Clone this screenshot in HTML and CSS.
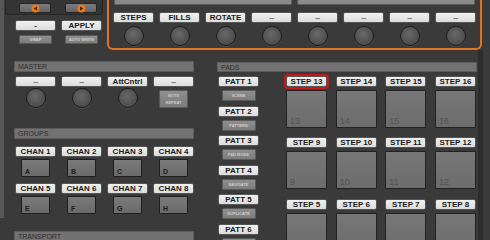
FILE: index.html
```html
<!DOCTYPE html>
<html>
<head>
  <title>Controller Mapping</title>
  <link rel="stylesheet" href="styles.css">
</head>
<body>
  <div class="rig">
    <div class="top">
      <div class="edit">
        <div class="nav">
          <div class="navbtn">
            <svg width="9" height="9" viewBox="0 0 9 9"><circle cx="4.5" cy="4.5" r="4" fill="#e8781c"/><path d="M6 2.4 L2.6 4.5 L6 6.6 Z" fill="#3b2814"/></svg>
          </div>
          <div class="navbtn">
            <svg width="9" height="9" viewBox="0 0 9 9"><circle cx="4.5" cy="4.5" r="4" fill="#e8781c"/><path d="M3 2.4 L6.4 4.5 L3 6.6 Z" fill="#3b2814"/></svg>
          </div>
        </div>
        <div class="pair">
          <div class="lbl">-</div>
          <div class="lbl">APPLY</div>
        </div>
        <div class="minirow">
          <div class="mini">SWAP</div>
          <div class="mini">AUTO WRITE</div>
        </div>
      </div>

      <div class="screen">
        <div class="displays">
          <div class="display"></div>
          <div class="display"></div>
        </div>
        <div class="knobs8">
          <div class="knobcol"><div class="lbl">STEPS</div><div class="knob"></div></div>
          <div class="knobcol"><div class="lbl">FILLS</div><div class="knob"></div></div>
          <div class="knobcol"><div class="lbl">ROTATE</div><div class="knob"></div></div>
          <div class="knobcol"><div class="lbl empty">--</div><div class="knob"></div></div>
          <div class="knobcol"><div class="lbl empty">--</div><div class="knob"></div></div>
          <div class="knobcol"><div class="lbl empty">--</div><div class="knob"></div></div>
          <div class="knobcol"><div class="lbl empty">--</div><div class="knob"></div></div>
          <div class="knobcol"><div class="lbl empty">--</div><div class="knob"></div></div>
        </div>
      </div>
    </div>

    <div class="bottom">
      <div class="left">
        <div class="head master">MASTER</div>
        <div class="row4">
          <div class="knobcol"><div class="lbl empty">--</div><div class="knob small-gap"></div></div>
          <div class="knobcol"><div class="lbl empty">--</div><div class="knob small-gap"></div></div>
          <div class="knobcol"><div class="lbl">AttCntrl</div><div class="knob small-gap"></div></div>
          <div class="knobcol"><div class="lbl empty">--</div><div class="mini tall">NOTE<br>REPEAT</div></div>
        </div>

        <div class="head groups">GROUPS</div>
        <div class="chans">
          <div class="chan"><div class="lbl">CHAN 1</div><div class="grp">A</div></div>
          <div class="chan"><div class="lbl">CHAN 2</div><div class="grp">B</div></div>
          <div class="chan"><div class="lbl">CHAN 3</div><div class="grp">C</div></div>
          <div class="chan"><div class="lbl">CHAN 4</div><div class="grp">D</div></div>
          <div class="chan"><div class="lbl">CHAN 5</div><div class="grp">E</div></div>
          <div class="chan"><div class="lbl">CHAN 6</div><div class="grp">F</div></div>
          <div class="chan"><div class="lbl">CHAN 7</div><div class="grp">G</div></div>
          <div class="chan"><div class="lbl">CHAN 8</div><div class="grp">H</div></div>
        </div>

        <div class="head transport">TRANSPORT</div>
      </div>

      <div class="pads">
        <div class="head padshead">PADS</div>
        <div class="padbody">
          <div class="patt">
            <div class="pattgrp"><div class="lbl">PATT 1</div><div class="mini">SCENE</div></div>
            <div class="pattgrp"><div class="lbl">PATT 2</div><div class="mini">PATTERN</div></div>
            <div class="pattgrp"><div class="lbl">PATT 3</div><div class="mini">PAD MODE</div></div>
            <div class="pattgrp"><div class="lbl">PATT 4</div><div class="mini">NAVIGATE</div></div>
            <div class="pattgrp"><div class="lbl">PATT 5</div><div class="mini">DUPLICATE</div></div>
            <div class="pattgrp"><div class="lbl">PATT 6</div><div class="mini">SELECT</div></div>
          </div>
          <div class="grid">
            <div class="cell"><div class="lbl active">STEP 13</div><div class="pad">13</div></div>
            <div class="cell"><div class="lbl">STEP 14</div><div class="pad">14</div></div>
            <div class="cell"><div class="lbl">STEP 15</div><div class="pad">15</div></div>
            <div class="cell"><div class="lbl">STEP 16</div><div class="pad">16</div></div>
            <div class="cell"><div class="lbl">STEP 9</div><div class="pad">9</div></div>
            <div class="cell"><div class="lbl">STEP 10</div><div class="pad">10</div></div>
            <div class="cell"><div class="lbl">STEP 11</div><div class="pad">11</div></div>
            <div class="cell"><div class="lbl">STEP 12</div><div class="pad">12</div></div>
            <div class="cell"><div class="lbl">STEP 5</div><div class="pad">5</div></div>
            <div class="cell"><div class="lbl">STEP 6</div><div class="pad">6</div></div>
            <div class="cell"><div class="lbl">STEP 7</div><div class="pad">7</div></div>
            <div class="cell"><div class="lbl">STEP 8</div><div class="pad">8</div></div>
          </div>
        </div>
      </div>
      <div class="rail"></div>
    </div>
  </div>
</body>
</html>
```

FILE: styles.css
```css
* {
  box-sizing: border-box;
}
body {
  margin: 0;
  width: 490px;
  height: 240px;
  overflow: hidden;
  background-color: #3a3a3a;
  font-family: "Liberation Sans", Arial, sans-serif;
}
.rig {
  height: 240px;
  border-left: 4px solid #575757;
}

/* top strip: edit buttons + screen area */
.top {
  display: flex;
  margin-top: -22px;
  height: 72px;
}
.edit {
  width: 103px;
}
.nav {
  margin-left: 1px;
  width: 98px;
  height: 37px;
  display: flex;
  align-items: flex-end;
  gap: 14px;
  padding: 0 0 1px 13px;
  background-color: #343434;
  border: 1px solid #262626;
  border-top: none;
  border-radius: 0 0 3px 3px;
}
.navbtn {
  width: 32px;
  height: 10px;
  display: flex;
  align-items: center;
  justify-content: center;
  background: linear-gradient(#7b7b7b, #656565);
  border: 1px solid #262626;
  border-radius: 2px;
}
.pair {
  display: flex;
  gap: 5px;
  padding-left: 11px;
  margin-top: 5px;
}
.minirow {
  display: flex;
  gap: 13px;
  padding-left: 15px;
  margin-top: 4px;
}
.screen {
  width: 375px;
  height: 72px;
  padding: 0 4px;
  border: 2px solid #e2731f;
  border-top: none;
  border-radius: 0 0 6px 6px;
}
.displays {
  display: flex;
  gap: 5px;
  padding: 0 1px;
}
.display {
  width: 178px;
  height: 27px;
  background-color: #8a8a8a;
  border: 1px solid #5c5c5c;
  border-top: none;
  border-radius: 0 0 2px 2px;
}
.knobs8 {
  display: flex;
  gap: 5px;
  margin-top: 7px;
}

/* shared bits */
.lbl {
  width: 41px;
  height: 11px;
  line-height: 9px;
  font-size: 8px;
  font-weight: bold;
  color: #1b1b1b;
  text-align: center;
  white-space: nowrap;
  background: linear-gradient(#f0f0f0, #dcdcdc);
  border: 1px solid #555;
  border-radius: 2px;
}
.lbl.empty {
  color: #6a6a6a;
  letter-spacing: -0.5px;
}
.lbl.active {
  outline: 2px solid #c81717;
}
.mini {
  width: 33px;
  height: 9px;
  line-height: 7px;
  font-size: 4px;
  font-weight: bold;
  color: #cdcdcd;
  text-align: center;
  white-space: nowrap;
  background: linear-gradient(#8e8e8e, #7c7c7c);
  border: 1px solid #5a5a5a;
  border-radius: 1px;
}
.mini.tall {
  width: 29px;
  height: 18px;
  margin-top: 3px;
  line-height: 7px;
  padding-top: 1px;
}
.knobcol {
  width: 41px;
  display: flex;
  flex-direction: column;
  align-items: center;
}
.knob {
  width: 20px;
  height: 20px;
  margin-top: 3px;
  border-radius: 50%;
  background: radial-gradient(circle at 45% 40%, #686868, #4e4e4e 65%, #444 100%);
  border: 1.5px solid #1d1d1d;
  box-shadow: 0 1px 0 #4c4c4c;
}
.knob.small-gap {
  margin-top: 1px;
}
.head {
  height: 11px;
  line-height: 10px;
  padding-left: 3px;
  font-size: 7px;
  color: #2e2e2e;
  background-color: #727272;
  border: 1px solid #5c5c5c;
}

/* lower area */
.bottom {
  display: flex;
}
.left {
  width: 180px;
  margin-left: 10px;
}
.head.master {
  margin-top: 11px;
}
.row4 {
  display: flex;
  gap: 5px;
  padding-left: 1px;
  margin-top: 4px;
}
.head.groups {
  margin-top: 20px;
}
.chans {
  display: grid;
  grid-template-columns: repeat(4, 41px);
  column-gap: 5px;
  row-gap: 6px;
  padding-left: 1px;
  margin-top: 7px;
}
.chan {
  display: flex;
  flex-direction: column;
  align-items: center;
}
.grp {
  width: 29px;
  height: 18px;
  margin-top: 2px;
  padding: 0 0 1px 3px;
  display: flex;
  align-items: flex-end;
  font-size: 7px;
  font-weight: bold;
  color: #1c1c1c;
  background: linear-gradient(#7a7a7a, #6a6a6a);
  border: 1px solid #1e1e1e;
  border-radius: 1px;
}
.head.transport {
  margin-top: 17px;
}

.pads {
  width: 260px;
  margin-left: 23px;
}
.head.padshead {
  margin-top: 12px;
  height: 10px;
  line-height: 9px;
}
.padbody {
  display: flex;
  margin-top: 4px;
}
.patt {
  width: 41px;
  margin-left: 1px;
}
.pattgrp {
  display: flex;
  flex-direction: column;
  align-items: center;
  margin-bottom: 4.5px;
}
.pattgrp .mini {
  width: 34px;
  height: 11px;
  line-height: 9px;
  margin-top: 3px;
}
.grid {
  width: 190px;
  margin-left: 27px;
  display: grid;
  grid-template-columns: repeat(4, 41px);
  justify-content: space-between;
  row-gap: 7px;
}
.pad {
  width: 41px;
  height: 38px;
  margin-top: 3px;
  padding: 0 0 1px 3px;
  display: flex;
  align-items: flex-end;
  font-size: 9px;
  color: #525252;
  background: linear-gradient(#777, #6c6c6c);
  border: 1px solid #222;
  border-radius: 1px;
}
.rail {
  width: 5px;
  height: 200px;
  margin-left: 1px;
  background-color: #2c2c2c;
}
```
